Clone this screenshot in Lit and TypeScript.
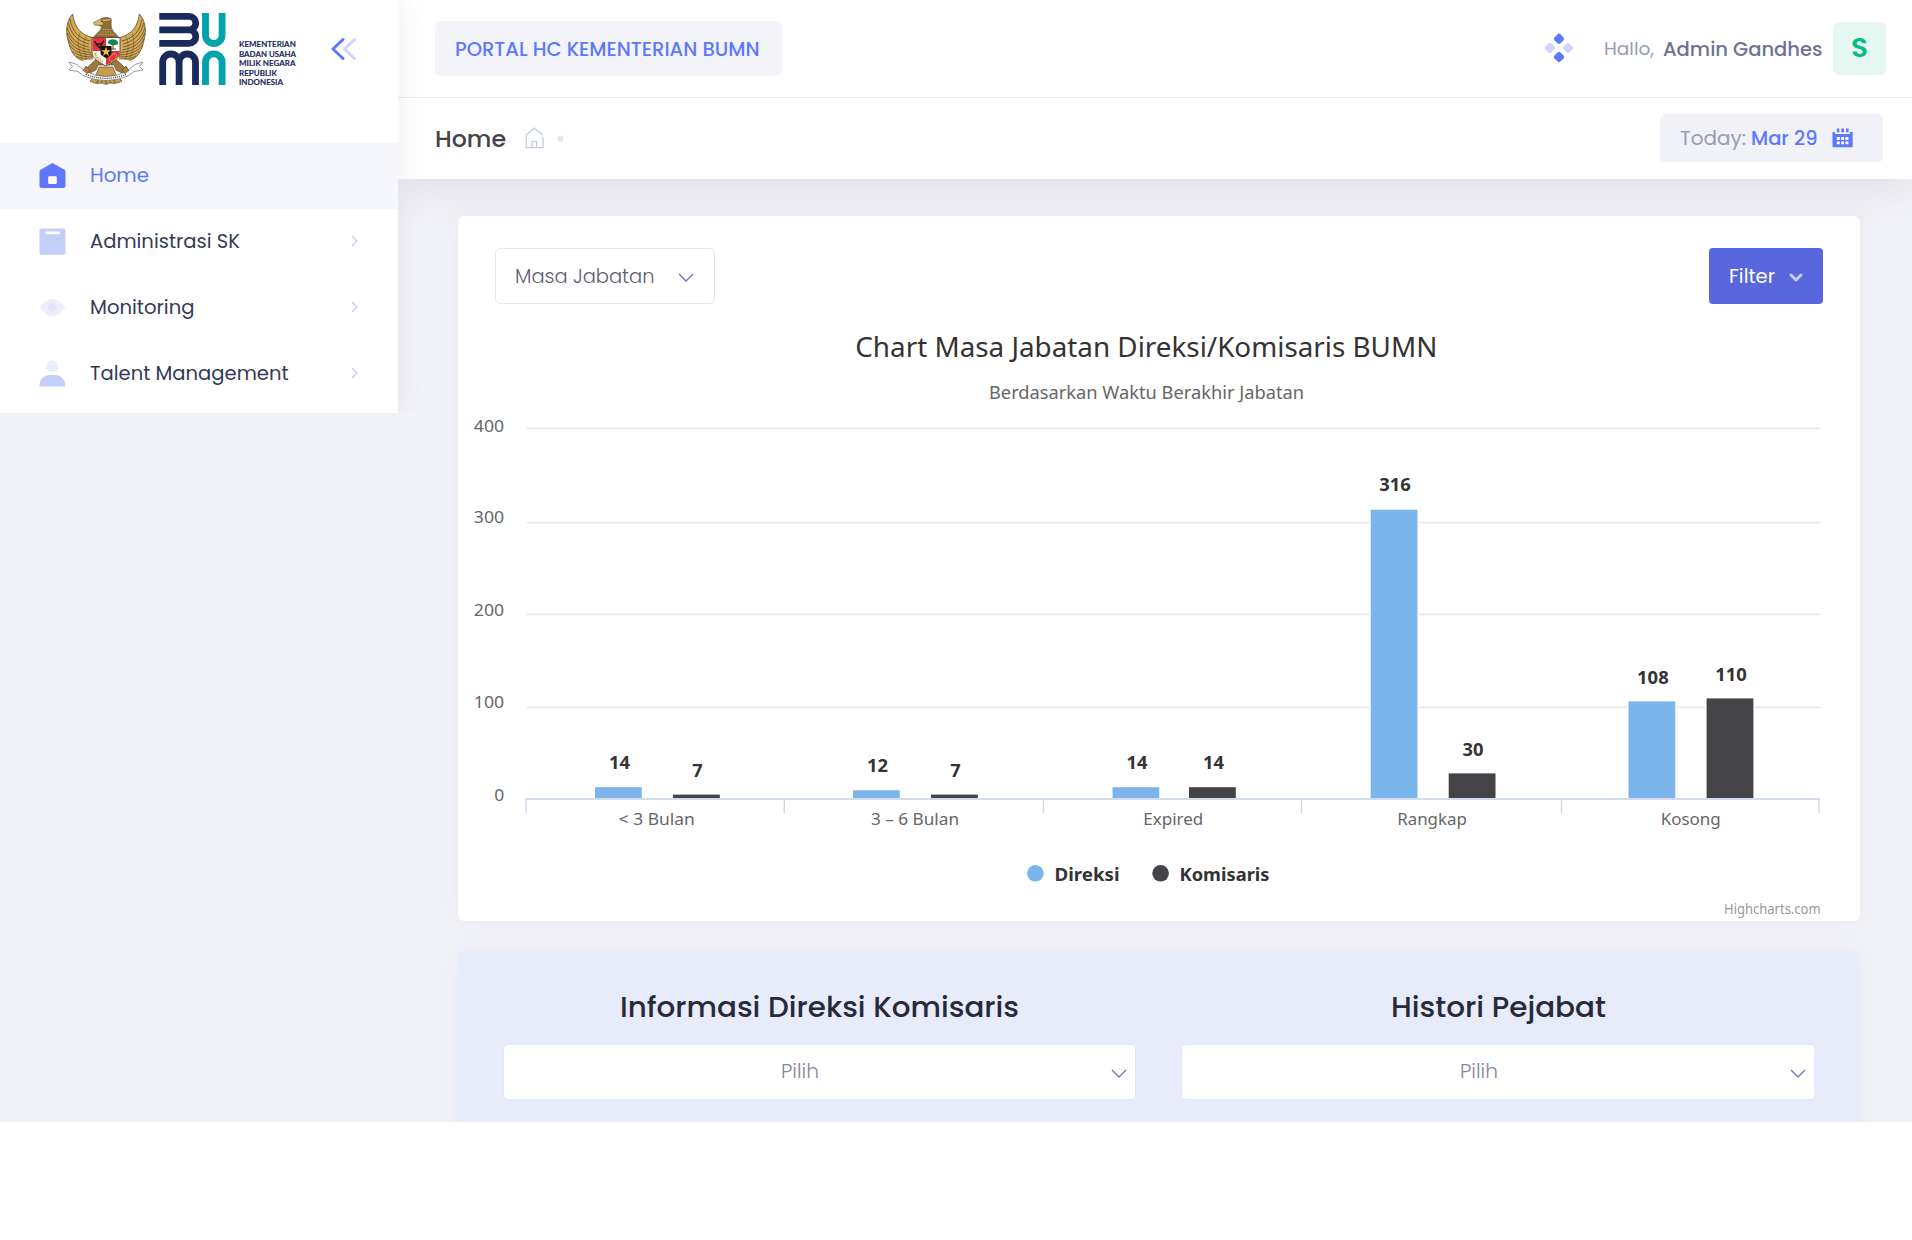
import { LitElement, html, svg, css } from "lit";
import { customElement } from "lit/decorators.js";

type Bar = { v: number; x: number; top: number; base: number; dark: boolean };

const BARS: Bar[] = [
  { v: 14, x: 595, top: 787.2, base: 768.7, dark: false },
  { v: 7, x: 673, top: 794.6, base: 776.7, dark: true },
  { v: 12, x: 853, top: 790.2, base: 771.7, dark: false },
  { v: 7, x: 931, top: 794.6, base: 776.7, dark: true },
  { v: 14, x: 1112.5, top: 787.2, base: 768.7, dark: false },
  { v: 14, x: 1189, top: 787.2, base: 768.7, dark: true },
  { v: 316, x: 1370.7, top: 509.7, base: 491.3, dark: false },
  { v: 30, x: 1448.7, top: 773.4, base: 755.5, dark: true },
  { v: 108, x: 1628.5, top: 701.4, base: 683.5, dark: false },
  { v: 110, x: 1706.6, top: 698.4, base: 680.5, dark: true },
];

const CATEGORIES: [string, number, number][] = [
  ["< 3 Bulan", 656.7, 76],
  ["3 – 6 Bulan", 915, 88],
  ["Expired", 1173.3, 60],
  ["Rangkap", 1432, 69.5],
  ["Kosong", 1690.7, 60],
];

const Y_AXIS: [string, number, number][] = [
  ["400", 432.3, 428.3],
  ["300", 523.3, 522.7],
  ["200", 616.3, 614.3],
  ["100", 708.3, 707.3],
];

const TICKS = [526, 784.3, 1043.5, 1301.5, 1561.5, 1819];

/* One line of text set to an exact advance width; capitals sit in the vertical centre. */
const label = (text: string, w: number, size: number, cls: string) => html`
  <svg class="label ${cls}" width=${w} height=${(size * 1.3).toFixed(2)}>
    <text x="0" y=${size} font-size=${size} textLength=${w} lengthAdjust="spacingAndGlyphs">${text}</text>
  </svg>`;

const mid = (text: string | number, x: number, y: number, w: number, cls: string) => svg`
  <text class=${cls} x=${x - w / 2} y=${y} textLength=${w} lengthAdjust="spacingAndGlyphs">${text}</text>`;

const chevron = (w: number, h: number, cls: string) => html`
  <svg class="chev ${cls}" width=${w + 2} height=${h + 2}>
    <path d="M1 1 L${1 + w / 2} ${h + 1} L${w + 1} 1" fill="none"></path>
  </svg>`;

const wing = svg`
  <path d="M6.7 1 C1 7 -1 17 2 27 C4 38 9 46 17 47.5 L27 45 L28 25 C22 23 14 21 10.5 13 C8.5 9 7 5 6.7 1Z" fill="#d6ab58"/>
  <g fill="none" stroke="#4d3c1f" stroke-width=".7">
    <path d="M6.7 1 C1 7 -1 17 2 27 C4 38 9 46 17 47.5"/>
    <path d="M6.7 1 C8 12 13 22 28 25"/>
    <path d="M4 6 C6 18 12 25 24 28"/>
    <path d="M2.4 10 C5 21 11 28 23 31"/>
    <path d="M1.3 15 C4 25 11 32 23 34"/>
    <path d="M1.2 20 C5 30 12 35 24 37"/>
    <path d="M2 26 C6 34 13 38.5 25 39.5"/>
    <path d="M3.5 32 C8 38 14 41 26 42"/>
    <path d="M6.5 38 C11 42 17 44 27 44"/>
    <path d="M10 43 C15 46 20 46 27 46"/>
    <path d="M20 23.5 C17 30 17 39 21 46 M14 19.5 C11 28 12 37 16 45" stroke-width=".4"/>
  </g>`;

const garuda = html`
  <svg class="garuda" viewBox="0 0 80 73" width="80" height="73">
    ${wing}
    <g transform="translate(80 0) scale(-1 1)">${wing}</g>
    <path d="M33 44 L26 50 L18 58 L22 61 L30 57 L32 52 L48 52 L50 57 L58 61 L62 58 L54 50 L47 44Z" fill="#9d7a3c" stroke="#4d3c1f" stroke-width=".6"/>
    <path d="M33 54 L30 62 L24 68 L27 69.5 L31 70.5 L36 70 L40 71.5 L44 70 L49 70.5 L53 69.5 L56 68 L50 62 L47 54Z" fill="#c79c4f" stroke="#4d3c1f" stroke-width=".6"/>
    <path d="M34 62 L31 70 M37 63 L35.5 70 M40 63 V71 M43 63 L44.5 70 M46 62 L49 70" stroke="#4d3c1f" stroke-width=".7"/>
    <path d="M33 8 C35 4 42 3.5 45 6 C45.5 11 44.5 14 47 18 L53 24.5 H27 L33.5 18 C36 15 36 13 33 12.5Z" fill="#8f6e35" stroke="#4d3c1f" stroke-width=".5"/>
    <path d="M27.5 9.5 L34 6.5 L45 5.5 L45.5 7.5 L37 9 L38 12 L33 12.5 L28.5 12Z" fill="#dab566" stroke="#4d3c1f" stroke-width=".5"/>
    <circle cx="36" cy="8.3" r=".9" fill="#2b1d10"/>
    <path d="M34 19 L46 19 M32 21.5 L49 21.5 M37 16.5 H45" stroke="#d9b468" stroke-width=".8" stroke-dasharray="1.4 1"/>
    <path d="M26 24.5 H54 V39 C54 46 46 49.5 40 53 C34 49.5 26 46 26 39Z" fill="#fff" stroke="#333" stroke-width=".8"/>
    <path d="M26.4 24.9 H40 V38 H26.4Z" fill="#e8303a"/>
    <path d="M40 38 H53.6 V39.5 C53.4 45.6 46 49 40 52.4Z" fill="#e8303a"/>
    <path d="M28.5 28 Q30 32 33.5 31 Q37 31 37.5 27.5 M30 31 L34 35 L36 31" fill="none" stroke="#1d1d1d" stroke-width="1.5"/>
    <path d="M42 30 C42 26.5 45 26.5 47 26.2 C51 26.3 52.5 29 52 31 C50 32.6 44 32.6 42 30Z" fill="#128a45"/>
    <path d="M47 31 V36 M44.5 36 H50" stroke="#6b4a25" stroke-width="1.1"/>
    <path d="M29 40 Q30 46 37 48.5" fill="none" stroke="#d9ae35" stroke-width="2.2" stroke-dasharray="1.6 .6"/>
    <ellipse cx="47" cy="44.5" rx="4.4" ry="2.6" transform="rotate(-48 47 44.5)" fill="none" stroke="#bf9050" stroke-width="1"/>
    <path d="M34.5 33 H45.5 V39.5 C45.5 42.5 42.5 43.6 40 45.2 C37.5 43.6 34.5 42.5 34.5 39.5Z" fill="#15130f"/>
    <path d="M40 33.8 L41.2 37.3 L44.8 37.3 L41.9 39.4 L43 43 L40 40.8 L37 43 L38.1 39.4 L35.2 37.3 L38.8 37.3Z" fill="#f7bf35"/>
    <path d="M3 49 L11 51.5 L19 58 Q40 69 61 58 L69 51.5 L77 49 L73.5 53.5 L77 57 L68 58.5 L62 63 Q40 72 18 63 L12 58.5 L3 57 L6.5 53.5Z" fill="#fff" stroke="#555" stroke-width=".6"/>
    <path d="M20 61.3 Q40 69.4 60 61.3" fill="none" stroke="#555" stroke-width="1.3" stroke-dasharray="1.2 .9"/>
    <path d="M17 58 L20 53 L24 57 L21 61 M63 58 L60 53 L56 57 L59 61" fill="#a98243" stroke="#4d3c1f" stroke-width=".6"/>
  </svg>`;

const bumnMark = html`
  <svg class="mark" viewBox="159 13 67 72" width="67" height="72">
    <g fill="none" stroke-width="6.8">
      <g stroke="#1a2a5c">
        <path d="M159.3 16.4 H189 A6.7 6.7 0 0 1 189 29.9 H159.3 M189 29.9 A6.75 6.75 0 0 1 189 43.4 H159.3"/>
        <path d="M162.7 85 V62.2 A8.2 8.2 0 0 1 179.1 62.2 V85 M179.1 62.2 A8.2 8.2 0 0 1 195.5 62.2 V85"/>
      </g>
      <g stroke="#00a2ab">
        <path d="M205.5 13 V35.2 A8.3 8.3 0 0 0 222.1 35.2 V13"/>
        <path d="M205.5 85 V62.2 A8.3 8.3 0 0 1 222.1 62.2 V85"/>
      </g>
    </g>
  </svg>`;

const brandText = html`
  <svg class="brandtext" viewBox="238.5 40 58 46" width="58" height="46">
    <text x="238.5" y="47.3" textLength="56.8" lengthAdjust="spacingAndGlyphs">KEMENTERIAN</text>
    <text x="238.5" y="56.7" textLength="57" lengthAdjust="spacingAndGlyphs">BADAN USAHA</text>
    <text x="238.5" y="66.1" textLength="56.5" lengthAdjust="spacingAndGlyphs">MILIK NEGARA</text>
    <text x="238.5" y="75.5" textLength="38" lengthAdjust="spacingAndGlyphs">REPUBLIK</text>
    <text x="238.5" y="85" textLength="44" lengthAdjust="spacingAndGlyphs">INDONESIA</text>
  </svg>`;

const ICONS = {
  home: svg`<path d="M13.5 1 L25 7.6 Q26.5 8.5 26.5 10.2 V23.5 Q26.5 26 24 26 H3 Q.5 26 .5 23.5 V10.2 Q.5 8.5 2 7.6Z" fill="#5d78ff"/><rect x="9.2" y="14.3" width="8.6" height="7.6" rx="1.2" fill="#fff"/>`,
  doc: svg`<rect x=".5" y=".5" width="26" height="26.3" rx="2" fill="#c3cef9"/><rect x="6.3" y="3.4" width="14.6" height="2.8" rx="1" fill="#fff"/>`,
  eye: svg`<path d="M.8 13.5 Q7 5 13.5 5 Q20 5 26.2 13.5 Q20 22.2 13.5 22.2 Q7 22.2 .8 13.5Z" fill="#ebeffd"/><circle cx="13.2" cy="13.5" r="4.3" fill="#dfe6fc"/>`,
  user: svg`<circle cx="13.3" cy="6.2" r="6" fill="#e9eefd"/><path d="M.5 26.5 Q.5 14.8 13.3 14.8 Q26.3 14.8 26.3 26.5Z" fill="#c3cef9"/>`,
};

@customElement("side-bar")
export class SideBar extends LitElement {
  static styles = css`
    :host { display: block; height: 413px; background: #fff; box-shadow: 0 0 28px rgba(82, 63, 105, 0.09); clip-path: inset(0 -40px 0 0); }
    .brand { display: flex; height: 143px; box-sizing: border-box; padding: 13px 0 0 66px; align-items: flex-start; }
    .garuda { margin-right: 13px; }
    .mark { margin-right: 12.5px; }
    .brandtext { margin: 27px 34.5px 0 0; font: 700 7.7px Lato, sans-serif; fill: #1a2a5c; stroke: #1a2a5c; stroke-width: 0.12; }
    .toggle { margin-top: 23.5px; }
    .row { display: flex; align-items: center; height: 66px; box-sizing: border-box; padding: 0 40px 2px 38.5px; color: #343a56; }
    .row.on { background: #f6f7fd; color: #5d78ff; }
    .ico { margin-right: 24px; }
    .label { overflow: visible; font-family: Poppins, Inter, sans-serif; fill: currentColor; font-weight: 400; }
    .arrow { margin-left: auto; }
  `;

  private row(icon: unknown, text: string, w: number, on = false) {
    return html`<div class="row ${on ? "on" : ""}">
      <svg class="ico" width="27" height="27">${icon}</svg>
      ${label(text, w, 19.5, "")}
      ${on ? "" : html`<svg class="arrow" width="7" height="12"><path d="M1 1 L6 6 L1 11" fill="none" stroke="#bfcbf6" stroke-width="1.2"/></svg>`}
    </div>`;
  }

  render() {
    return html`
      <div class="brand">
        ${garuda}${bumnMark}${brandText}
        <svg class="toggle" width="26" height="24" fill="none" stroke-width="3" stroke-linecap="round" stroke-linejoin="round">
          <path d="M23.5 2.5 L13.5 12 L23.5 21.5" stroke="#ccd5ff"/>
          <path d="M12 2.5 L2 12 L12 21.5" stroke="#5d78ff"/>
        </svg>
      </div>
      ${this.row(ICONS.home, "Home", 59, true)}
      ${this.row(ICONS.doc, "Administrasi SK", 150)}
      ${this.row(ICONS.eye, "Monitoring", 104.5)}
      ${this.row(ICONS.user, "Talent Management", 198.5)}
    `;
  }
}

@customElement("tenure-chart")
export class TenureChart extends LitElement {
  static styles = css`
    :host { display: block; }
    svg { display: block; font-family: "Lucida Grande", "Lucida Sans Unicode", "Noto Sans", sans-serif; }
    .grid { stroke: #e8e8e8; stroke-width: 1.7; }
    .axis { stroke: #d2dcee; stroke-width: 1.8; }
    .tick { stroke: #ccd6eb; stroke-width: 1.4; }
    .title { font-size: 27.4px; fill: #333; }
    .sub { font-size: 18px; fill: #666; }
    .small { font-size: 16.8px; fill: #666; }
    .val { font-size: 17px; font-weight: 700; fill: #333; }
    .leg { font-size: 18.4px; font-weight: 700; fill: #333; }
    .credit { font-size: 13.6px; fill: #999; }
    .light { fill: #7cb5ec; }
    .dark { fill: #434348; }
    .bar { stroke: #fff; stroke-width: 1.6; }
  `;

  render() {
    return html`
      <svg viewBox="458 304 1402 617" width="1402" height="617">
        ${mid("Chart Masa Jabatan Direksi/Komisaris BUMN", 1146.3, 356.8, 582, "title")}
        ${mid("Berdasarkan Waktu Berakhir Jabatan", 1146.5, 399, 315, "sub")}
        ${Y_AXIS.map(([t, b, y]) => svg`
          ${mid(t, 489, b, 30.3, "small")}
          <line class="grid" x1="527" x2="1820" y1=${y} y2=${y}></line>`)}
        ${mid("0", 499.2, 801.3, 10, "small")}
        ${BARS.map((b) => svg`
          <rect class="bar ${b.dark ? "dark" : "light"}" x=${b.x - 0.8} y=${b.top - 0.8} width="48.4" height=${799.6 - b.top}></rect>
          ${mid(b.v, b.x + 24.4, b.base, [0, 10.4, 21, 31.6][String(b.v).length], "val")}`)}
        <line class="axis" x1="525.3" x2="1820" y1="799" y2="799"></line>
        ${TICKS.map((x) => svg`<line class="tick" x1=${x} x2=${x} y1="799" y2="813"></line>`)}
        ${CATEGORIES.map(([t, x, w]) => mid(t, x, 825.4, w, "small"))}
        <circle class="light" cx="1035.4" cy="873.3" r="8.3"></circle>
        ${mid("Direksi", 1087, 881.3, 65, "leg")}
        <circle class="dark" cx="1160.6" cy="873.3" r="8.3"></circle>
        ${mid("Komisaris", 1224.5, 881.3, 90, "leg")}
        ${mid("Highcharts.com", 1772.3, 913.6, 96.6, "credit")}
      </svg>`;
  }
}

@customElement("app-root")
export class AppRoot extends LitElement {
  static styles = css`
    :host { display: block; width: 1912px; height: 1240px; overflow: hidden; background: #fff; }
    .label { display: block; overflow: visible; font-family: Poppins, Inter, sans-serif; fill: currentColor; flex: none; }
    .shell { display: grid; grid-template-columns: 398px 1fr; height: 1122px; overflow: hidden; background: #f1f2f7; }
    side-bar { z-index: 3; align-self: start; }
    .main { display: flex; flex-direction: column; min-width: 0; }
    .top { position: relative; z-index: 2; background: #fff; box-shadow: 0 10px 40px rgba(82, 63, 105, 0.1); }
    .header { display: flex; align-items: center; height: 98px; box-sizing: border-box; border-bottom: 1px solid #ebedf2; padding: 0 26px 0 37px; }
    .portal { display: flex; align-items: center; justify-content: center; width: 347px; height: 55px; border-radius: 6px; background: #f3f4f9; color: #5d78ff; margin-right: auto; padding-right: 2px; box-sizing: border-box; }
    .dots { margin-right: 28.5px; margin-bottom: 2px; }
    .w4 { font-weight: 400; }
    .w5 { font-weight: 500; }
    .w6 { font-weight: 600; }
    .w3 { font-weight: 300; }
    .hello { color: #959cb6; margin-right: 9.5px; }
    .name { color: #6c7293; margin-right: 10.5px; }
    .avatar { display: grid; place-items: center; width: 53px; height: 53px; border-radius: 6px; background: #e5f7f2; color: #0abb87; margin-bottom: 1px; }
    .sub { display: flex; align-items: center; height: 81px; box-sizing: border-box; padding: 0 29px 0 36.5px; }
    .crumb { color: #434349; margin-right: 19px; padding-top: 1px; }
    .house { margin-right: 12px; margin-bottom: 1px; }
    .today { display: flex; align-items: center; width: 223px; height: 48px; box-sizing: border-box; padding-left: 20px; margin: 0 0 1px auto; border-radius: 5px; background: #f0f2f7; color: #959cb6; }
    .date { color: #5d78ff; margin: 0 14.5px 0 5px; }
    .content { display: flex; flex-direction: column; gap: 30px; padding: 37px 52px 0 60px; }
    .card { border-radius: 6px; background: #fff; box-shadow: 0 0 26px rgba(82, 63, 105, 0.05); }
    .chart { height: 705px; }
    .tools { display: flex; justify-content: space-between; padding: 32px 37px 0; height: 88px; box-sizing: border-box; }
    .select { display: flex; align-items: center; box-sizing: border-box; border: 1px solid #e2e5ec; border-radius: 5px; background: #fff; height: 56px; }
    .tenure { width: 220px; padding: 0 20.5px 0 19px; justify-content: space-between; color: #595d6e; }
    .filter { display: flex; align-items: center; justify-content: space-between; width: 114px; height: 56px; box-sizing: border-box; padding: 0 21px 0 20px; border-radius: 4px; background: #5867dd; color: #fff; }
    .chev { flex: none; overflow: visible; }
    .thin { stroke: #6874b8; stroke-width: 1.3; margin-top: 3px; }
    .bold { stroke: #c8cdf4; stroke-width: 3; stroke-linecap: round; stroke-linejoin: round; margin-top: 3px; }
    .info { display: grid; grid-template-columns: 633px 634px; column-gap: 45px; height: 210px; box-sizing: border-box; padding: 42.5px 45px 0; background: #e7ebfa; }
    .heading { display: flex; justify-content: center; align-items: center; height: 27px; margin-bottom: 23px; color: #282a3c; }
    .pick { padding: 0 8.5px 0 0; color: #85879b; border-color: #e4e8f5; }
    .value { flex: 1; display: flex; justify-content: center; padding: 0 14px 1px 0; }
  `;

  private picker(title: string, w: number) {
    return html`<div>
      <div class="heading">${label(title, w, 28.8, "w5")}</div>
      <div class="select pick">
        <div class="value">${label("Pilih", 38, 19.5, "w3")}</div>
        ${chevron(14, 7, "thin")}
      </div>
    </div>`;
  }

  render() {
    return html`
      <div class="shell">
        <side-bar></side-bar>
        <div class="main">
          <div class="top">
            <div class="header">
              <div class="portal">${label("PORTAL HC KEMENTERIAN BUMN", 304.5, 19.5, "w5")}</div>
              <svg class="dots" width="32" height="32" viewBox="-16 -16 32 32">
                <g fill="#5d78ff">
                  <rect x="-4.2" y="-4.2" width="8.4" height="8.4" rx="2" transform="translate(0 -9.2) rotate(45)"/>
                  <rect x="-4.2" y="-4.2" width="8.4" height="8.4" rx="2" transform="translate(0 9) rotate(45)"/>
                </g>
                <g fill="#ced6ff">
                  <rect x="-4.2" y="-4.2" width="8.4" height="8.4" rx="2" transform="translate(-9 0) rotate(45)"/>
                  <rect x="-4.2" y="-4.2" width="8.4" height="8.4" rx="2" transform="translate(9 0) rotate(45)"/>
                </g>
              </svg>
              <div class="hello">${label("Hallo,", 50, 18, "w4")}</div>
              <div class="name">${label("Admin Gandhes", 159.5, 19.5, "w5")}</div>
              <div class="avatar">${label("S", 17, 27, "w6")}</div>
            </div>
            <div class="sub">
              <div class="crumb">${label("Home", 71, 22.8, "w5")}</div>
              <svg class="house" width="20" height="22" fill="none" stroke="#c6cbea" stroke-width="1.4">
                <path d="M18 8 L9.5 1.2 L1.2 8 V20.6 H18 V10 M7.2 20.6 V14.4 H11.6 V20.6"/>
              </svg>
              <svg width="7" height="7"><circle cx="3.5" cy="3.5" r="3" fill="#e3e3f1"/></svg>
              <div class="today">
                ${label("Today:", 66, 19.5, "w4")}
                <div class="date">${label("Mar 29", 66.5, 19.5, "w5")}</div>
                <svg width="21" height="20" viewBox="0 0 21 20">
                  <path d="M.5 4 H3 V6 H18 V4 H20.7 V19.3 H.5Z" fill="#5d78ff"/>
                  <path d="M4.8 .5 H7.3 V4.2 H4.8Z M9.3 .5 H12 V4.2 H9.3Z M14 .5 H16.7 V4.2 H14Z" fill="#5d78ff"/>
                  <path d="M4.8 9 H7.8 V12 H4.8Z M9.2 9 H12 V12 H9.2Z M13.4 9 H16.4 V12 H13.4Z M4.8 13.5 H7.8 V16.3 H4.8Z M9.2 13.5 H12 V16.3 H9.2Z M13.4 13.5 H16.4 V16.3 H13.4Z" fill="#fff"/>
                </svg>
              </div>
            </div>
          </div>
          <div class="content">
            <div class="card chart">
              <div class="tools">
                <div class="select tenure">${label("Masa Jabatan", 139.5, 19.5, "w3")}${chevron(14, 7, "thin")}</div>
                <div class="filter">${label("Filter", 46, 19.5, "w4")}${chevron(10, 5, "bold")}</div>
              </div>
              <tenure-chart></tenure-chart>
            </div>
            <div class="card info">
              ${this.picker("Informasi Direksi Komisaris", 399)}
              ${this.picker("Histori Pejabat", 215)}
            </div>
          </div>
        </div>
      </div>`;
  }
}
